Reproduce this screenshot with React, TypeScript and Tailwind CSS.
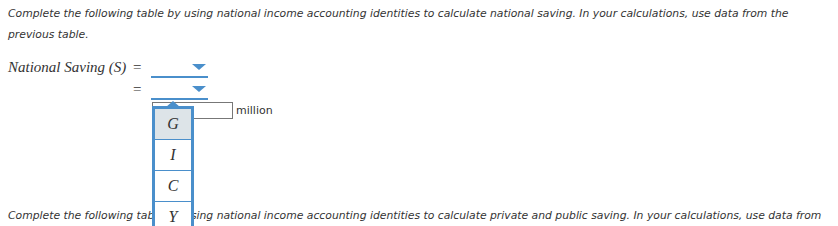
import { useState } from "react"

const sans = { fontFamily: '"DejaVu Sans", Verdana, sans-serif' }
const serif = { fontFamily: '"Liberation Serif", "Times New Roman", serif' }

function Dropdown() {
  return (
    <div className="relative h-[20px] w-[57px] border-b-2 border-[#4a8fcb]">
      <span className="absolute right-[2px] top-[6px] h-0 w-0 border-x-[7px] border-t-[6px] border-x-transparent border-t-[#4a8fcb]" />
    </div>
  )
}

export default function App() {
  const [options] = useState(["G", "I", "C", "Y"])
  return (
    <div className="h-[226px] w-[838px] overflow-hidden bg-white text-[#333]">
      <div className="px-2 pt-[3px]">
        <p className="text-[10.8px] italic leading-[21px]" style={sans}>
          Complete the following table by using national income accounting identities to calculate national saving. In your calculations, use data from the
          <br />
          previous table.
        </p>

        <div className="mt-[11px] grid grid-cols-[117px_max-content] items-end" style={serif}>
          <div className="whitespace-nowrap text-[15px] italic leading-[22px]">National Saving (S)</div>
          <div className="flex items-end gap-[10px] pl-[8px]">
            <span className="text-[15px] leading-[22px]">=</span>
            <Dropdown />
          </div>
          <div />
          <div className="flex items-end gap-[10px] pl-[8px]">
            <span className="text-[15px] leading-[22px]">=</span>
            <Dropdown />
          </div>
          <div />
          <div className="mt-[2px] flex h-[17px] items-center pl-[27px]">
            <div className="relative">
              <div className="h-[17px] w-[81px] border border-[#777] bg-white" />
              <div className="absolute left-0 top-[4px] z-10 w-[42px]">
                <span className="absolute left-[14px] top-[-5px] h-0 w-0 border-x-[7px] border-b-[6px] border-x-transparent border-b-[#4a8fcb]" />
                <ul className="border-x-[3px] border-t-[3px] border-[#4a8fcb] bg-white">
                  {options.map((o, i) => (
                    <li
                      key={o}
                      className={`flex h-[31px] items-center justify-center border-b border-[#4a8fcb] text-[16px] italic ${i === 0 ? "bg-[#dde4e8]" : ""}`}
                    >
                      {o}
                    </li>
                  ))}
                </ul>
              </div>
            </div>
            <span className="ml-[3px] text-[11px] leading-[17px]" style={sans}>
              million
            </span>
          </div>
        </div>

        <p className="mt-[86px] text-[10.8px] italic leading-[21px]" style={sans}>
          Complete the following table by using national income accounting identities to calculate private and public saving. In your calculations, use data from
        </p>
      </div>
    </div>
  )
}
